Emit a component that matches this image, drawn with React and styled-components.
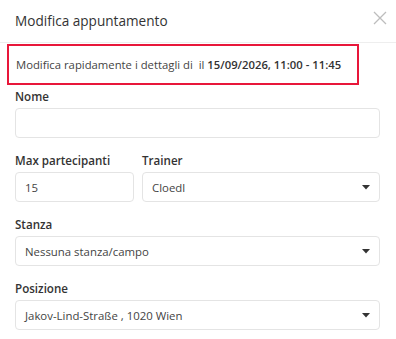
import { createGlobalStyle, styled } from "styled-components";

const GlobalStyle = createGlobalStyle`
  html, body {
    margin: 0;
    padding: 0;
    background: #fff;
  }
  body {
    font-family: "Open Sans", "Liberation Sans", sans-serif;
    color: #333;
  }
  * {
    box-sizing: border-box;
  }
`;

const fields = [
  { label: "Stanza", value: "Nessuna stanza/campo" },
  { label: "Posizione", value: "Jakov-Lind-Straße , 1020 Wien" },
];

export default function App() {
  return (
    <>
      <GlobalStyle />
      <Modal>
        <Header>
          <Title>Modifica appuntamento</Title>
          <CloseBtn aria-label="Chiudi">
            <svg width="14" height="14" viewBox="0 0 14 14">
              <path
                d="M1 1 L13 13 M13 1 L1 13"
                stroke="#bdbdbd"
                strokeWidth="1.3"
                fill="none"
              />
            </svg>
          </CloseBtn>
        </Header>
        <Body>
          <Notice>
            Modifica rapidamente i dettagli di&nbsp; il{" "}
            <strong>15/09/2026, 11:00 - 11:45</strong>
          </Notice>
          <Field>
            <Label>Nome</Label>
            <Input />
          </Field>
          <Row>
            <Field>
              <Label>Max partecipanti</Label>
              <Input>15</Input>
            </Field>
            <Field>
              <Label>Trainer</Label>
              <Select>
                Cloedl
                <Caret />
              </Select>
            </Field>
          </Row>
          {fields.map((f) => (
            <Field key={f.label}>
              <Label>{f.label}</Label>
              <Select>
                {f.value}
                <Caret />
              </Select>
            </Field>
          ))}
        </Body>
      </Modal>
    </>
  );
}

const Caret = () => (
  <CaretIcon width="8" height="5" viewBox="0 0 8 5">
    <path d="M0 0 L8 0 L4 4.5 Z" fill="#333" />
  </CaretIcon>
);

const Modal = styled.div`
  width: 396px;
  height: 339px;
  background: #fff;
  overflow: hidden;
`;

const Header = styled.div`
  height: 43px;
  padding: 0 9px 0 15px;
  display: flex;
  align-items: center;
  justify-content: space-between;
  border-bottom: 1px solid #eeeeee;
`;

const Title = styled.h2`
  margin: 0 0 4px;
  font-size: 13.6px;
  font-weight: 400;
  color: #333;
  transform-origin: left center;
  transform: scaleY(1.12);
`;

const CloseBtn = styled.button`
  border: 0;
  background: none;
  padding: 0;
  width: 14px;
  height: 14px;
  margin: 0 0 6px;
  display: flex;
  cursor: pointer;
`;

const Body = styled.div`
  padding: 1px 16px 0 15px;
  display: flex;
  flex-direction: column;
  gap: 14px;
`;

const Notice = styled.div`
  margin: 0 0 -11px -8px;
  width: 352px;
  height: 41px;
  border: 2.5px solid #e8173a;
  padding: 0 0 0 7px;
  display: flex;
  align-items: center;
  font-size: 11.3px;
  color: #444;
  white-space: nowrap;

  strong {
    font-weight: 600;
    color: #333;
    margin-left: 3px;
  }
`;

const Field = styled.div`
  display: flex;
  flex-direction: column;
  gap: 2px;
  min-width: 0;
`;

const Row = styled.div`
  display: grid;
  grid-template-columns: 119px 1fr;
  gap: 8px;
`;

const Label = styled.label`
  font-size: 11.6px;
  font-weight: 600;
  line-height: 18px;
  color: #333;
`;

const Input = styled.div`
  height: 30px;
  border: 1px solid #e4e4e4;
  border-radius: 4px;
  padding: 0 9px;
  display: flex;
  align-items: center;
  font-size: 11.4px;
  color: #444;
`;

const Select = styled(Input)`
  justify-content: space-between;
  padding-right: 9px;
`;

const CaretIcon = styled.svg`
  flex-shrink: 0;
`;
